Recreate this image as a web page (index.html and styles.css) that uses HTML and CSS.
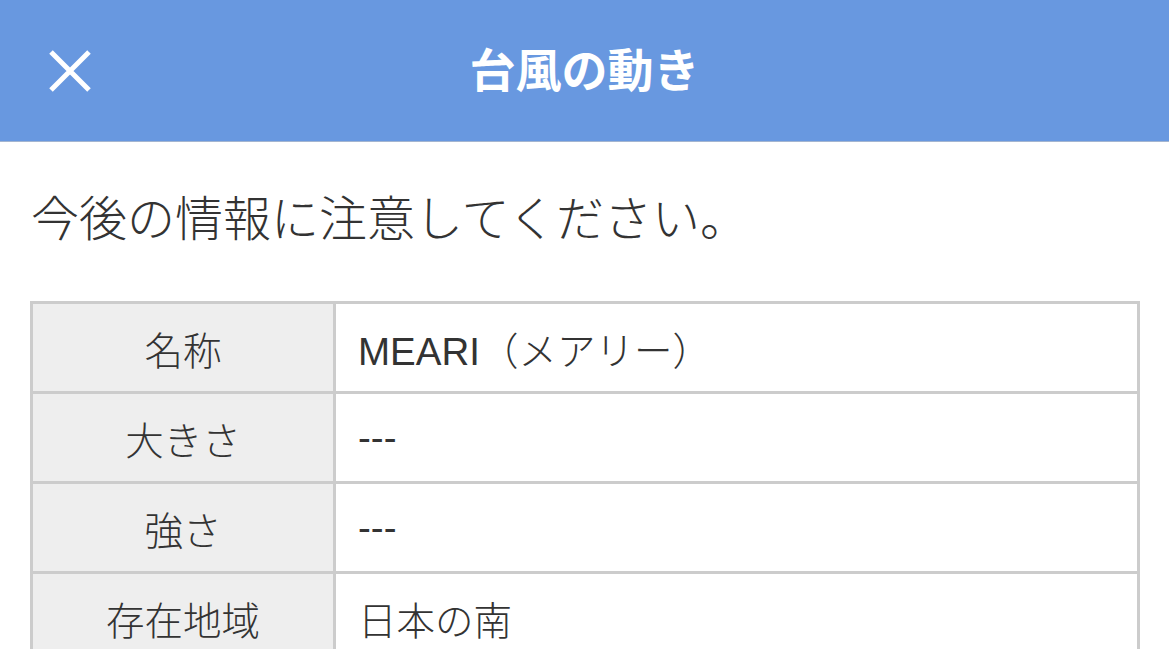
FILE: index.html
```html
<!DOCTYPE html>
<html lang="ja">
<head>
    <meta charset="UTF-8">
    <meta name="viewport" content="width=device-width, initial-scale=1.0">
    <title>台風の動き</title>
    <link rel="stylesheet" href="styles.css">
</head>
<body>
    <header class="top-bar">
        <div class="close-cell">
            <button class="close-button" aria-label="閉じる">
                <svg width="44" height="44" viewBox="0 0 44 44">
                    <path d="M3 3 L41 41 M41 3 L3 41" stroke="#fff" stroke-width="5" fill="none"/>
                </svg>
            </button>
        </div>
        <h1 class="title">台風の動き</h1>
        <div></div>
    </header>
    <main>
        <p class="notice">今後の情報に注意してください。</p>
        <table class="info-table">
            <tbody>
                <tr>
                    <th>名称</th>
                    <td>MEARI（メアリー）</td>
                </tr>
                <tr>
                    <th>大きさ</th>
                    <td>---</td>
                </tr>
                <tr>
                    <th>強さ</th>
                    <td>---</td>
                </tr>
                <tr>
                    <th>存在地域</th>
                    <td>日本の南</td>
                </tr>
                <tr>
                    <th>中心気圧</th>
                    <td>994hPa</td>
                </tr>
            </tbody>
        </table>
    </main>
</body>
</html>
```

FILE: styles.css
```css
body {
    margin: 0;
    padding: 0;
    background-color: #fff;
    color: #333;
    font-family: "Liberation Sans", "Noto Sans CJK JP", sans-serif;
}

.top-bar {
    display: grid;
    grid-template-columns: 1fr auto 1fr;
    align-items: center;
    height: 141px;
    background-color: #6898e0;
    border-bottom: 1px solid #a3b5d0;
}

.close-cell {
    padding-left: 48px;
}

.close-button {
    display: block;
    width: 44px;
    height: 44px;
    padding: 0;
    margin: 0;
    border: none;
    background: none;
    cursor: pointer;
}

.close-button svg {
    display: block;
}

.title {
    margin: 0;
    color: #fff;
    font-size: 46px;
    font-weight: bold;
    line-height: 56px;
}

main {
    padding: 0 29px 0 30px;
}

.notice {
    margin: 0;
    padding: 50px 0 0 1px;
    font-size: 48px;
    font-weight: 300;
    line-height: 56px;
}

.info-table {
    width: 100%;
    margin-top: 53px;
    border-collapse: collapse;
    border: 3px solid #cccccc;
    font-size: 38.5px;
}

.info-table th,
.info-table td {
    height: 87px;
    padding: 0;
    border: 3px solid #cccccc;
    font-weight: 300;
}

.info-table th {
    width: 300px;
    background-color: #eeeeee;
    text-align: center;
}

.info-table td {
    padding-left: 22px;
    text-align: left;
    background-color: #fff;
}
```
